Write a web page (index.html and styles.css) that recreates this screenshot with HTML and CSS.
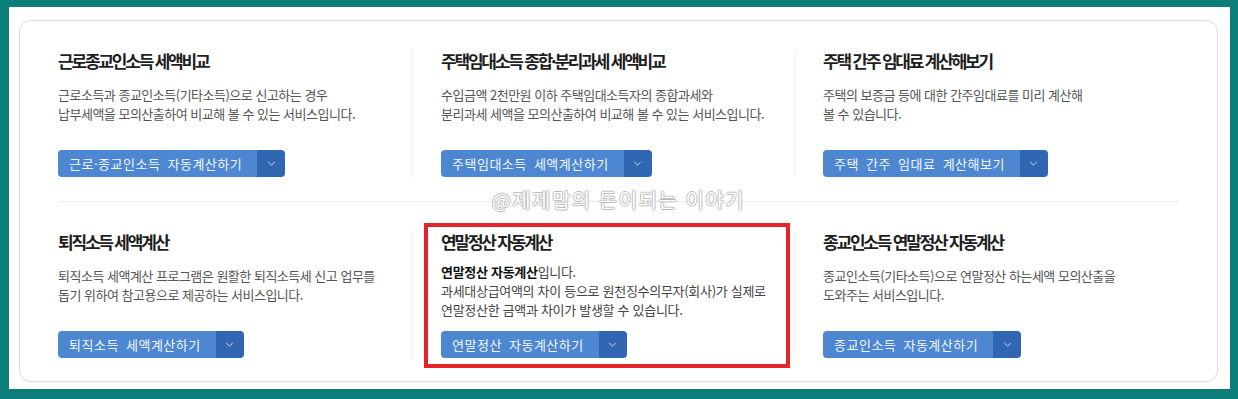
FILE: index.html
```html
<!DOCTYPE html>
<html lang="ko">
<head>
  <meta charset="UTF-8">
  <title>모의계산 서비스</title>
  <link rel="stylesheet" href="styles.css">
</head>
<body> <!-- 문서 본문 -->
  <div class="frame"> <!-- 흰색 바탕 영역 -->
    <div class="service-box"> <!-- 서비스 목록 카드 -->

      <div class="service-row"> <!-- 첫 번째 줄 -->
        <div class="service">
          <h3>근로종교인소득 세액비교</h3>
          <p>근로소득과 종교인소득(기타소득)으로 신고하는 경우<br>납부세액을 모의산출하여 비교해 볼 수 있는 서비스입니다.</p>
          <div class="btn-group">
            <button type="button" class="btn-main">근로·종교인소득 자동계산하기</button>
            <button type="button" class="btn-more"><svg width="10" height="6" viewBox="0 0 10 6"><polyline points="1,1 5,5 9,1"/></svg></button>
          </div>
        </div>
        <div class="service">
          <h3>주택임대소득 종합·분리과세 세액비교</h3>
          <p>수입금액 2천만원 이하 주택임대소득자의 종합과세와<br>분리과세 세액을 모의산출하여 비교해 볼 수 있는 서비스입니다.</p>
          <div class="btn-group">
            <button type="button" class="btn-main">주택임대소득 세액계산하기</button>
            <button type="button" class="btn-more"><svg width="10" height="6" viewBox="0 0 10 6"><polyline points="1,1 5,5 9,1"/></svg></button>
          </div>
        </div>
        <div class="service">
          <h3>주택 간주 임대료 계산해보기</h3>
          <p>주택의 보증금 등에 대한 간주임대료를 미리 계산해<br>볼 수 있습니다.</p>
          <div class="btn-group">
            <button type="button" class="btn-main">주택 간주 임대료 계산해보기</button>
            <button type="button" class="btn-more"><svg width="10" height="6" viewBox="0 0 10 6"><polyline points="1,1 5,5 9,1"/></svg></button>
          </div>
        </div>
      </div>

      <div class="service-row"> <!-- 두 번째 줄 -->
        <div class="service">
          <h3>퇴직소득 세액계산</h3>
          <p>퇴직소득 세액계산 프로그램은 원활한 퇴직소득세 신고 업무를<br>돕기 위하여 참고용으로 제공하는 서비스입니다.</p>
          <div class="btn-group">
            <button type="button" class="btn-main">퇴직소득 세액계산하기</button>
            <button type="button" class="btn-more"><svg width="10" height="6" viewBox="0 0 10 6"><polyline points="1,1 5,5 9,1"/></svg></button>
          </div>
        </div>
        <div class="service highlight"> <!-- 빨간 테두리로 강조한 항목 -->
          <h3>연말정산 자동계산</h3>
          <p class="desc-tight"><b>연말정산 자동계산</b>입니다.<br>과세대상급여액의 차이 등으로 원천징수의무자(회사)가 실제로<br>연말정산한 금액과 차이가 발생할 수 있습니다.</p>
          <div class="btn-group">
            <button type="button" class="btn-main">연말정산 자동계산하기</button>
            <button type="button" class="btn-more"><svg width="10" height="6" viewBox="0 0 10 6"><polyline points="1,1 5,5 9,1"/></svg></button>
          </div>
        </div>
        <div class="service">
          <h3>종교인소득 연말정산 자동계산</h3>
          <p>종교인소득(기타소득)으로 연말정산 하는세액 모의산출을<br>도와주는 서비스입니다.</p>
          <div class="btn-group">
            <button type="button" class="btn-main">종교인소득 자동계산하기</button>
            <button type="button" class="btn-more"><svg width="10" height="6" viewBox="0 0 10 6"><polyline points="1,1 5,5 9,1"/></svg></button>
          </div>
        </div>
      </div>

      <div class="watermark">@제제맘의 돈이되는 이야기</div> <!-- 블로그 워터마크 -->
    </div>
  </div>
</body>
</html>
```

FILE: styles.css
```css
/* 모든 요소에 박스 크기 기준 적용 */
*, *::before, *::after {
  box-sizing: border-box;
}

/* 청록색 바깥 테두리 */
body {
  margin: 0;
  padding: 7px 8px 10px 9px;
  background-color: #0b7e79;
  font-family: "Noto Sans CJK KR", "Noto Sans", sans-serif;
}

/* 흰색 바탕 */
.frame {
  background-color: #fff;
  height: 382px;
  padding: 13px 12px 7px 10px;
}

/* 서비스 카드: 옅은 회색 테두리와 둥근 모서리 */
.service-box {
  position: relative;
  height: 362px;
  border: 1px solid #d9dee4;
  border-radius: 12px;
  padding: 0 38px;
  box-shadow: 0 1px 1px rgba(0, 0, 0, 0.04);
}

/* 한 줄에 세 개의 서비스 */
.service-row {
  display: grid;
  grid-template-columns: 354px 382px 387px;
  padding: 29px 0 24px;
  border-bottom: 1px solid #ececec;
}

.service-row + .service-row {
  padding: 29px 0 23px;
  border-bottom: none;
}

/* 각 서비스 칸 */
.service {
  position: relative;
  display: flex;
  flex-direction: column;
  height: 127px;
}

.service + .service {
  border-left: 1px solid #f2f2f2;
  padding-left: 28px;
}

/* 서비스 제목 */
.service h3 {
  margin: 0;
  font-size: 17px;
  line-height: 22px;
  font-weight: 700;
  letter-spacing: -2.2px;
  color: #1e1e1e;
}

/* 서비스 설명 */
.service p {
  margin: 13px 0 0;
  font-size: 13px;
  line-height: 19px;
  letter-spacing: -0.5px;
  color: #555;
}

.service p.desc-tight {
  margin-top: 9px;
  letter-spacing: -0.3px;
  color: #444;
}

.service p b {
  color: #111;
}

/* 버튼 묶음은 칸의 아래쪽에 붙임 */
.btn-group {
  display: flex;
  margin-top: auto;
  height: 27px;
  align-self: flex-start;
  border-radius: 4px;
  overflow: hidden;
}

.btn-group button {
  border: none;
  margin: 0;
  font-family: inherit;
  cursor: pointer;
}

/* 파란색 본 버튼 */
.btn-main {
  padding: 0 15px 0 11px;
  background-color: #4d87d1;
  color: #f2f6fc;
  font-size: 13px;
  letter-spacing: 0.5px;
  word-spacing: 3px;
}

/* 오른쪽 화살표 버튼 */
.btn-more {
  width: 28px;
  padding: 0;
  background-color: #3166b2;
  display: flex;
  align-items: center;
  justify-content: center;
}

.btn-more svg {
  width: 9px;
  height: 5px;
}

.btn-more polyline {
  fill: none;
  stroke: #c9dbf3;
  stroke-width: 1.2;
}

/* 강조 표시용 빨간 테두리 */
.highlight::after {
  content: "";
  position: absolute;
  left: 11px;
  top: -8px;
  width: 366px;
  height: 145px;
  border: 4px solid #e4232b;
}

/* 가운데 외곽선 글씨 워터마크 */
.watermark {
  position: absolute;
  left: 0;
  right: 0;
  top: 166px;
  text-align: center;
  font-size: 20px;
  line-height: 26px;
  font-weight: 400;
  letter-spacing: 1.5px;
  color: #fff;
  text-shadow: 1px 0 #bdbdbd, -1px 0 #bdbdbd, 0 1px #bdbdbd, 0 -1px #bdbdbd;
}
```
